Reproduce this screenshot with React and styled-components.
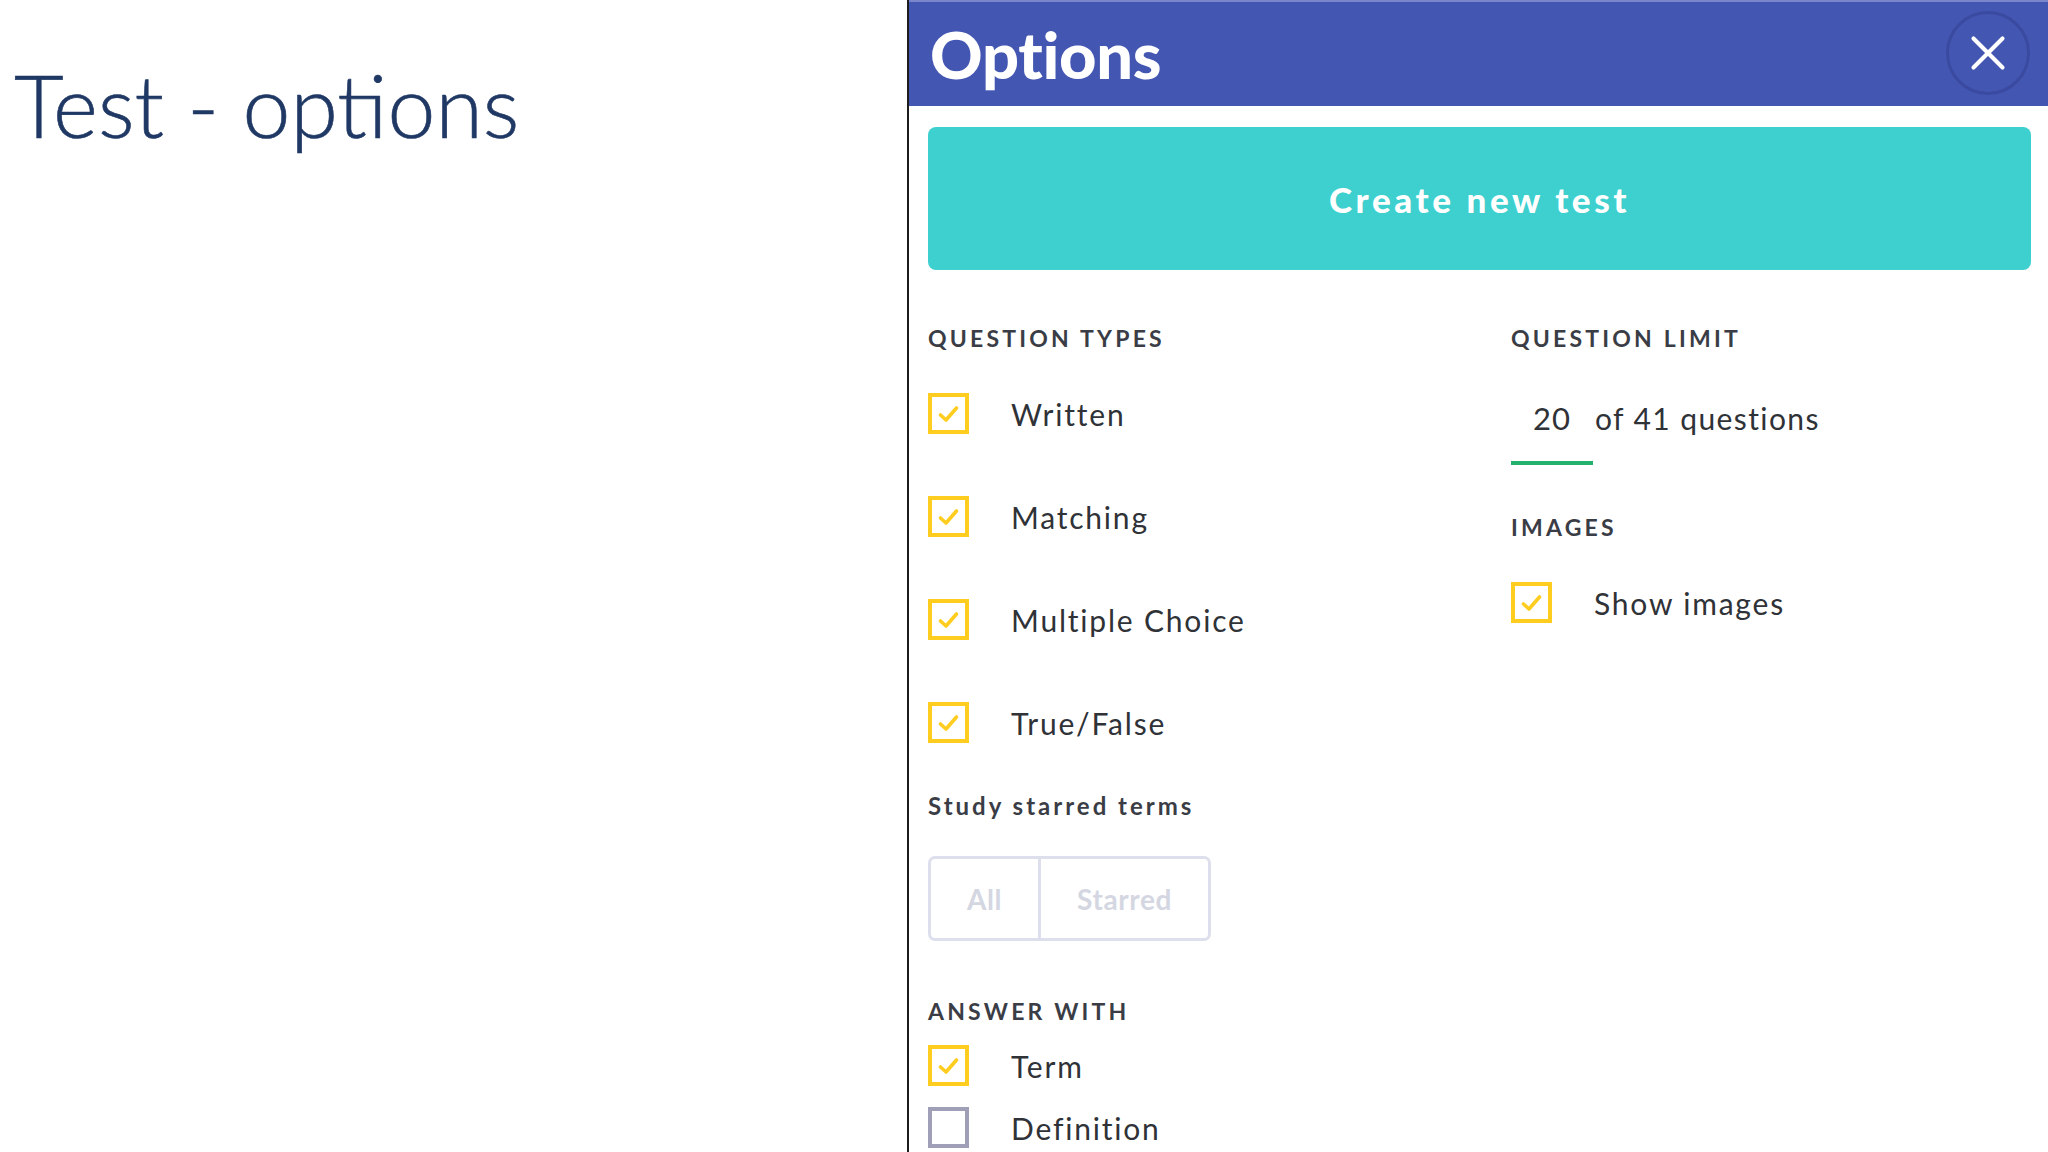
import React from "react";
import styled, { createGlobalStyle } from "styled-components";
import { X } from "lucide-react";

const GlobalStyle = createGlobalStyle`
  html, body {
    margin: 0;
    padding: 0;
    background: #ffffff;
  }
  body {
    font-family: "Lato", "Noto Sans", sans-serif;
  }
`;

const questionTypes = [
  { label: "Written", checked: true },
  { label: "Matching", checked: true },
  { label: "Multiple Choice", checked: true },
  { label: "True/False", checked: true },
];

function CheckBox({ checked }) {
  return (
    <Box checked={checked}>
      {checked && (
        <svg width="26" height="26" viewBox="0 0 26 26">
          <polyline
            points="4.5,14 10,19 20.5,7"
            fill="none"
            stroke="#ffcd1f"
            strokeWidth="3.6"
            strokeLinecap="round"
            strokeLinejoin="round"
          />
        </svg>
      )}
    </Box>
  );
}

function Option({ label, checked }) {
  return (
    <OptionRow>
      <CheckBox checked={checked} />
      <OptionLabel>{label}</OptionLabel>
    </OptionRow>
  );
}

function App() {
  return (
    <>
      <GlobalStyle />
      <Page>
        <Slide>
          <SlideTitle>Test - options</SlideTitle>
        </Slide>
        <Panel>
          <Header>
            <HeaderTitle>Options</HeaderTitle>
            <CloseButton>
              <X size={58} strokeWidth={1.7} color="#ffffff" />
            </CloseButton>
          </Header>
          <Body>
            <CreateButton>Create new test</CreateButton>
            <Columns>
              <Column>
                <SectionLabel>QUESTION TYPES</SectionLabel>
                <OptionList>
                  {questionTypes.map((q) => (
                    <Option key={q.label} label={q.label} checked={q.checked} />
                  ))}
                </OptionList>
                <StarLabel>Study starred terms</StarLabel>
                <Segment>
                  <SegmentItem wide={false}>All</SegmentItem>
                  <SegmentItem wide>Starred</SegmentItem>
                </Segment>
                <SectionLabel gap={56}>ANSWER WITH</SectionLabel>
                <AnswerList>
                  <Option label="Term" checked />
                  <Option label="Definition" checked={false} />
                </AnswerList>
              </Column>
              <Column>
                <SectionLabel>QUESTION LIMIT</SectionLabel>
                <LimitRow>
                  <LimitField>20</LimitField>
                  <LimitText>of 41 questions</LimitText>
                </LimitRow>
                <SectionLabel gap={48}>IMAGES</SectionLabel>
                <ImagesList>
                  <Option label="Show images" checked />
                </ImagesList>
              </Column>
            </Columns>
          </Body>
        </Panel>
      </Page>
    </>
  );
}

//============================== Styles ======================================//

const Page = styled.div`
  display: flex;
  width: 2048px;
  height: 1152px;
  overflow: hidden;
  background: #ffffff;
`;

const Slide = styled.div`
  width: 907px;
  flex-shrink: 0;
  padding: 53px 0 0 14px;
  box-sizing: border-box;
`;

const SlideTitle = styled.h1`
  margin: 0;
  font-family: "Lato", sans-serif;
  font-weight: 300;
  font-size: 86px;
  line-height: 1.2;
  color: #1f3864;
  -webkit-text-stroke: 0.6px #1f3864;
`;

const Panel = styled.section`
  flex: 1;
  display: flex;
  flex-direction: column;
  border-left: 2px solid #1c1c1c;
`;

const Header = styled.header`
  height: 106px;
  box-sizing: border-box;
  border-top: 2px solid #7a86cc;
  background: #4356b2;
  display: flex;
  align-items: center;
  justify-content: space-between;
  padding: 0 18px 0 21px;
`;

const HeaderTitle = styled.h2`
  margin: 0;
  font-family: "Lato", sans-serif;
  font-weight: 900;
  font-size: 65px;
  letter-spacing: -0.3px;
  color: #ffffff;
`;

const CloseButton = styled.button`
  width: 84px;
  height: 84px;
  border-radius: 50%;
  border: 3px solid #3a4aa0;
  background: #4356b2;
  display: flex;
  align-items: center;
  justify-content: center;
  padding: 0;
  margin-top: -2px;
`;

const Body = styled.div`
  padding: 21px 17px 0 19px;
`;

const CreateButton = styled.button`
  width: 100%;
  height: 143px;
  border: 0;
  border-radius: 8px;
  background: #3ecfcf;
  color: #ffffff;
  font-family: "Lato", sans-serif;
  font-weight: 900;
  font-size: 35px;
  letter-spacing: 3.6px;
`;

const Columns = styled.div`
  display: grid;
  grid-template-columns: 583px 1fr;
`;

const Column = styled.div`
  display: flex;
  flex-direction: column;
  align-items: flex-start;
`;

const SectionLabel = styled.div`
  margin-top: ${(p) => (p.gap ? p.gap : 54)}px;
  font-family: "Lato", sans-serif;
  font-weight: 700;
  font-size: 23px;
  line-height: 28px;
  letter-spacing: 3.2px;
  color: #3a3d45;
`;

const OptionList = styled.div`
  margin-top: 41px;
  display: flex;
  flex-direction: column;
  gap: 62px;
`;

const AnswerList = styled.div`
  margin-top: 20px;
  display: flex;
  flex-direction: column;
  gap: 21px;
`;

const ImagesList = styled.div`
  margin-top: 41px;
`;

const OptionRow = styled.label`
  display: flex;
  align-items: center;
  gap: 42px;
  height: 41px;
`;

const Box = styled.span`
  width: 41px;
  height: 41px;
  box-sizing: border-box;
  border: 4px solid ${(p) => (p.checked ? "#ffcd1f" : "#a09fb8")};
  display: flex;
  align-items: center;
  justify-content: center;
  flex-shrink: 0;
`;

const OptionLabel = styled.span`
  font-family: "Lato", sans-serif;
  font-size: 30px;
  letter-spacing: 1.8px;
  color: #2f3237;
`;

const StarLabel = styled.div`
  margin-top: 49px;
  font-family: "Lato", sans-serif;
  font-weight: 700;
  font-size: 24px;
  line-height: 28px;
  letter-spacing: 3px;
  color: #3a3d45;
`;

const Segment = styled.div`
  margin-top: 36px;
  display: flex;
  height: 85px;
  box-sizing: border-box;
  border: 3px solid #dde0ec;
  border-radius: 7px;
`;

const SegmentItem = styled.div`
  width: ${(p) => (p.wide ? 167 : 107)}px;
  display: flex;
  align-items: center;
  justify-content: center;
  border-left: ${(p) => (p.wide ? "3px solid #dde0ec" : "0")};
  font-family: "Lato", sans-serif;
  font-weight: 700;
  font-size: 28px;
  letter-spacing: 0.6px;
  color: #d4d7e2;
`;

const LimitRow = styled.div`
  margin-top: 46px;
  display: flex;
  align-items: flex-start;
  gap: 2px;
`;

const LimitField = styled.div`
  width: 82px;
  height: 67px;
  box-sizing: border-box;
  border-bottom: 4px solid #23b26d;
  text-align: center;
  font-family: "Lato", sans-serif;
  font-size: 31px;
  line-height: 40px;
  letter-spacing: 1px;
  color: #2f3237;
`;

const LimitText = styled.div`
  font-family: "Lato", sans-serif;
  font-size: 30px;
  line-height: 40px;
  letter-spacing: 1.4px;
  color: #2f3237;
`;

export default App;
